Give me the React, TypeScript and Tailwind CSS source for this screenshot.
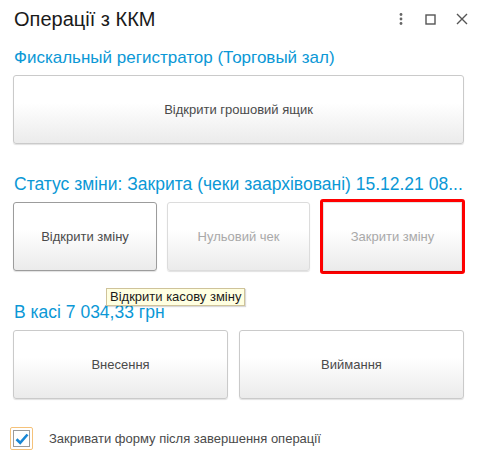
import React from "react";

const font = { fontFamily: '"Liberation Sans", Arial, sans-serif' };

function Btn({
  label,
  variant = "normal",
  className = "",
}: {
  label: string;
  variant?: "normal" | "default" | "disabled";
  className?: string;
}) {
  const border =
    variant === "default"
      ? "border-[#9c9c9c]"
      : variant === "disabled"
      ? "border-[#dcdcdc]"
      : "border-[#cacaca]";
  const text = variant === "disabled" ? "text-[#a9a9a9]" : "text-[#4a4a4a]";
  return (
    <div
      className={`flex h-[69px] items-center justify-center rounded-[3px] border bg-gradient-to-b from-white from-40% to-[#ebebeb] text-[13px] shadow-[0_1px_1px_rgba(0,0,0,0.12)] ${border} ${text} ${className}`}
    >
      {label}
    </div>
  );
}

export default function App() {
  return (
    <div className="relative h-[467px] w-[500px] bg-white" style={font}>
      {/* title bar */}
      <div className="flex h-[24px] items-center pl-[14px] pt-0 mt-[7px]">
        <div className="text-[20px] leading-[24px] text-[#1a1a1a]">Операції з ККМ</div>
        <div className="ml-auto flex items-center pr-[32px]">
          <svg width="6" height="14" viewBox="0 0 6 14" className="mr-[21px]">
            <circle cx="3" cy="2.5" r="1.4" fill="#666" />
            <circle cx="3" cy="7" r="1.4" fill="#666" />
            <circle cx="3" cy="11.5" r="1.4" fill="#666" />
          </svg>
          <svg width="11" height="11" viewBox="0 0 11 11" className="mr-[20px]">
            <rect x="1" y="1" width="9" height="9" fill="none" stroke="#555" strokeWidth="1.4" />
          </svg>
          <svg width="12" height="12" viewBox="0 0 12 12">
            <path d="M1 1 L11 11 M11 1 L1 11" stroke="#555" strokeWidth="1.4" />
          </svg>
        </div>
      </div>

      <div className="ml-[13px] w-[451px]">
        <div className="mt-[17px] text-[17px] leading-[20px] text-[#0b98d6] pl-[1px]">
          Фискальный регистратор (Торговый зал)
        </div>
        <Btn label="Відкрити грошовий ящик" className="mt-[7px]" />

        <div className="mt-[30px] whitespace-nowrap text-[17.5px] leading-[20px] text-[#0b98d6] pl-[1px]">
          Статус зміни: Закрита (чеки заархівовані) 15.12.21 08...
        </div>
        <div className="mt-[8px] flex gap-[10px]">
          <Btn label="Відкрити зміну" variant="default" className="w-[144px]" />
          <Btn label="Нульовий чек" variant="disabled" className="w-[143px]" />
          <div className="w-[145px] rounded-[3px] border-[3px] border-[#ff0000] -my-[3px] -mr-[2px]">
            <Btn
              label="Закрити зміну"
              variant="disabled"
              className="!h-[69px] !border-[#e3e3e3] !rounded-none"
            />
          </div>
        </div>

        <div className="mt-[31.5px] text-[17.5px] leading-[18px] text-[#0b98d6] pl-[1px]">
          В касі 7 034,33 грн
        </div>
        <div className="mt-[9.5px] flex gap-[11px]">
          <Btn label="Внесення" className="w-[215px]" />
          <Btn label="Виймання" className="flex-1" />
        </div>

        <div className="mt-[28px] flex items-center">
          <div className="-ml-[3px] flex h-[23px] w-[23px] items-center justify-center rounded-[2px] border border-[#f5c27a]">
            <div className="flex h-[17px] w-[17px] items-center justify-center border border-[#9a9a9a] bg-white">
              <svg width="14" height="12" viewBox="0 0 14 12">
                <path d="M1.5 6.2 L5.2 9.8 L12.5 1.5" fill="none" stroke="#1787d6" strokeWidth="2.6" />
              </svg>
            </div>
          </div>
          <div className="ml-[16px] text-[13px] text-[#4a4a4a]">
            Закривати форму після завершення операції
          </div>
        </div>
      </div>

      {/* tooltip */}
      <div className="absolute left-[106px] top-[281px] h-[18px] border border-[#cfc39a] bg-[#ffffe1] px-[3px] text-[13px] leading-[16px] text-[#1a1a1a] shadow-[1px_1px_1px_rgba(0,0,0,0.15)]">
        Відкрити касову зміну
      </div>
    </div>
  );
}
